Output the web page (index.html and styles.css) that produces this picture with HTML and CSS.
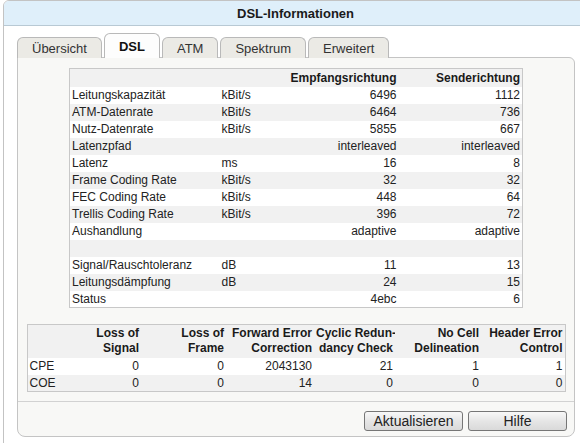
FILE: index.html
```html
<!DOCTYPE html>
<html lang="de">
<head>
    <meta charset="UTF-8">
    <title>DSL-Informationen</title>
    <link rel="stylesheet" href="styles.css">
</head>
<body>
    <div class="window">
        <div class="titlebar">DSL-Informationen</div>
        <div class="content">
            <ul class="tabs">
                <li class="tab">Übersicht</li>
                <li class="tab active">DSL</li>
                <li class="tab">ATM</li>
                <li class="tab">Spektrum</li>
                <li class="tab">Erweitert</li>
            </ul>
            <div class="panel">
                <table class="grid info">
                    <colgroup>
                        <col class="c-label"><col class="c-unit"><col class="c-down"><col class="c-up">
                    </colgroup>
                    <tr class="head"><th></th><th></th><th>Empfangsrichtung</th><th>Senderichtung</th></tr>
                    <tr><td>Leitungskapazität</td><td>kBit/s</td><td>6496</td><td>1112</td></tr>
                    <tr><td>ATM-Datenrate</td><td>kBit/s</td><td>6464</td><td>736</td></tr>
                    <tr><td>Nutz-Datenrate</td><td>kBit/s</td><td>5855</td><td>667</td></tr>
                    <tr><td>Latenzpfad</td><td></td><td>interleaved</td><td>interleaved</td></tr>
                    <tr><td>Latenz</td><td>ms</td><td>16</td><td>8</td></tr>
                    <tr><td>Frame Coding Rate</td><td>kBit/s</td><td>32</td><td>32</td></tr>
                    <tr><td>FEC Coding Rate</td><td>kBit/s</td><td>448</td><td>64</td></tr>
                    <tr><td>Trellis Coding Rate</td><td>kBit/s</td><td>396</td><td>72</td></tr>
                    <tr><td>Aushandlung</td><td></td><td>adaptive</td><td>adaptive</td></tr>
                    <tr><td>&nbsp;</td><td></td><td></td><td></td></tr>
                    <tr><td>Signal/Rauschtoleranz</td><td>dB</td><td>11</td><td>13</td></tr>
                    <tr><td>Leitungsdämpfung</td><td>dB</td><td>24</td><td>15</td></tr>
                    <tr><td>Status</td><td></td><td>4ebc</td><td>6</td></tr>
                </table>

                <table class="grid errors">
                    <colgroup>
                        <col class="e-label"><col class="e-los"><col class="e-lof"><col class="e-fec">
                        <col class="e-crc"><col class="e-ncd"><col class="e-hec">
                    </colgroup>
                    <tr class="head">
                        <th></th>
                        <th>Loss of<br>Signal</th>
                        <th>Loss of<br>Frame</th>
                        <th>Forward Error<br>Correction</th>
                        <th>Cyclic Redun-<br>dancy Check</th>
                        <th>No Cell<br>Delineation</th>
                        <th>Header Error<br>Control</th>
                    </tr>
                    <tr><td>CPE</td><td>0</td><td>0</td><td>2043130</td><td>21</td><td>1</td><td>1</td></tr>
                    <tr><td>COE</td><td>0</td><td>0</td><td>14</td><td>0</td><td>0</td><td>0</td></tr>
                </table>

                <div class="actions">
                    <button class="btn">Aktualisieren</button>
                    <button class="btn">Hilfe</button>
                </div>
            </div>
        </div>
    </div>
</body>
</html>
```

FILE: styles.css
```css
body {
    margin: 0;
    background-color: #fff;
    font-family: "Liberation Sans", Arial, sans-serif;
    color: #222;
    overflow: hidden;
}

.window {
    width: 590px;
    height: 445px;
    margin-left: 3px;
    border: 1px solid #c3c3c3;
    border-radius: 6px 6px 0 0;
    box-sizing: border-box;
}

.titlebar {
    height: 24px;
    line-height: 25px;
    padding-right: 5px;
    background-color: #dfeffa;
    border-bottom: 1px solid #b8c9d4;
    border-radius: 5px 5px 0 0;
    text-align: center;
    font-size: 13px;
    font-weight: bold;
    color: #1a1a1a;
}

.content {
    padding: 8px 0 0 13px;
}

/* tabs */
.tabs {
    display: flex;
    align-items: flex-end;
    gap: 2px;
    height: 24px;
    margin: 0 0 -1px 0;
    padding: 0;
    list-style: none;
}

.tab {
    height: 20px;
    line-height: 21px;
    padding: 0 14px;
    font-size: 13px;
    color: #333;
    background-color: #ebeae5;
    border: 1px solid #b9b9b9;
    border-bottom: none;
    border-radius: 6px 6px 0 0;
}

.tab.active {
    position: relative;
    z-index: 1;
    height: 24px;
    line-height: 25px;
    font-weight: bold;
    color: #111;
    background-color: #fdfdfd;
}

/* panel */
.panel {
    width: 558px;
    height: 380px;
    box-sizing: border-box;
    border: 1px solid #c4c4c4;
    border-radius: 0 6px 8px 8px;
    background-color: #f8f8f6;
    display: flex;
    flex-direction: column;
    align-items: center;
    padding-top: 10px;
}

.grid {
    border-collapse: collapse;
    table-layout: fixed;
    border: 1px solid #c8c8c8;
    font-size: 12px;
    background-color: #fff;
}

.grid td,
.grid th {
    padding: 0 2px;
    text-align: right;
    white-space: nowrap;
    overflow: hidden;
}

.grid th {
    font-weight: bold;
    color: #1a1a1a;
}

.grid tr {
    height: 17px;
}

.grid tr:nth-child(odd) {
    background-color: #f1f1f1;
}

.info {
    width: 453px;
}

.info tr.head {
    height: 18px;
}

.info td:nth-child(1),
.info td:nth-child(2) {
    text-align: left;
}

.c-label { width: 150px; }
.c-unit { width: 68px; }
.c-down { width: 111px; }
.c-up { width: 124px; }

.errors {
    width: 538px;
    margin-top: 16px;
}

.errors tr.head {
    height: 33px;
    line-height: 15px;
}

.errors td:first-child {
    text-align: left;
}

.e-label { width: 58px; }
.e-los { width: 56px; }
.e-lof { width: 85px; }
.e-fec { width: 88px; }
.e-crc { width: 81px; }
.e-ncd { width: 86px; }
.e-hec { width: 84px; }

/* buttons */
.actions {
    align-self: stretch;
    margin-top: 9px;
    border-top: 1px solid #d2d2d2;
    display: flex;
    justify-content: flex-end;
    gap: 5px;
    padding: 9px 7px 0 0;
}

.btn {
    width: 99px;
    height: 20px;
    padding: 0;
    font-family: "Liberation Sans", Arial, sans-serif;
    font-size: 14px;
    line-height: 18px;
    color: #222;
    border: 1px solid #767676;
    border-radius: 3px;
    background: linear-gradient(#f8f8f8, #e6e6e6 50%, #d9d9d9);
    cursor: pointer;
}

.btn:hover {
    background: linear-gradient(#eef7fd, #d6ebf9);
}
```
